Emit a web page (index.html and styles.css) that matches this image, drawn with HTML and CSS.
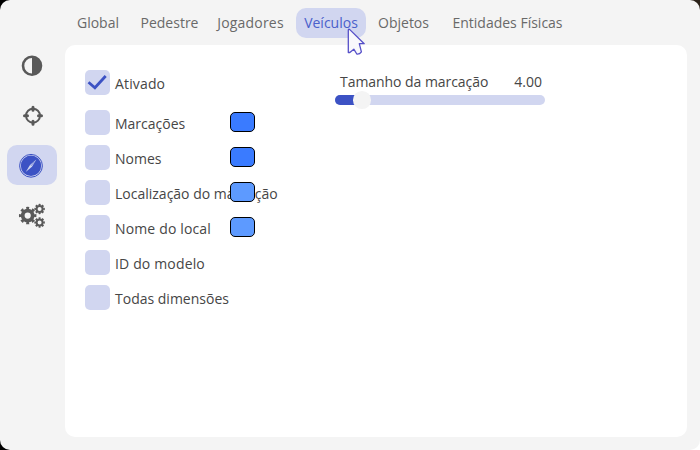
FILE: index.html
```html
<!DOCTYPE html>
<html lang="pt-BR">
<head>
<meta charset="utf-8">
<title>Veículos</title>
<link rel="stylesheet" href="styles.css">
</head>
<body>
<div class="window">
  <nav class="sidebar">
    <a class="side-item"><svg width="50" height="40" viewBox="7 45 50 40"><circle cx="32" cy="65.7" r="9" fill="none" stroke="#595959" stroke-width="2.6"/><path d="M32 56.5a9.2 9.2 0 0 1 0 18.4z" fill="#595959"/></svg></a>
    <a class="side-item"><svg width="50" height="40" viewBox="7 95 50 40"><g fill="none" stroke="#595959"><circle cx="33" cy="115.700" r="7" stroke-width="1.900"/><path stroke-width="3" stroke-linecap="round" d="M33 107.200v3M33 121.200v3M24.500 115.700h3M38.500 115.700h3"/></g></svg></a>
    <a class="side-item active"><svg width="50" height="40" viewBox="7 145 50 40"><circle cx="31" cy="165.800" r="11.400" fill="none" stroke="#3c52c4" stroke-width="1"/><circle cx="31" cy="165.800" r="10.200" fill="#3c52c4"/><path d="M36.300 159.600 32 166.700 25.700 172 30 164.900z" fill="#d1d6f0"/><path d="M34.600 161.600 31 165.800" stroke="#3c52c4" stroke-width=".6"/></svg></a>
    <a class="side-item"><svg width="50" height="40" viewBox="7 195 50 40"><g fill="none" stroke="#595959"><circle cx="27.700" cy="215.600" r="5" stroke-width="3.800"/><circle cx="27.700" cy="215.600" r="7.500" stroke-width="2.500" pathLength="16" stroke-dasharray="1" stroke-dashoffset=".5"/><circle cx="39.600" cy="209" r="3" stroke-width="2"/><circle cx="39.600" cy="209" r="4.400" stroke-width="1.700" pathLength="16" stroke-dasharray="1.200 .8" stroke-dashoffset=".6"/><circle cx="39.600" cy="222.500" r="3" stroke-width="2"/><circle cx="39.600" cy="222.500" r="4.400" stroke-width="1.700" pathLength="16" stroke-dasharray="1.200 .8" stroke-dashoffset=".6"/></g></svg></a>
  </nav>
  <div class="main">
    <nav class="tabs">
      <a class="tab global">Global</a>
      <a class="tab pedestre">Pedestre</a>
      <a class="tab jogadores">Jogadores</a>
      <a class="tab veiculos active">Veículos</a>
      <a class="tab objetos">Objetos</a>
      <a class="tab entidades">Entidades Físicas</a>
    </nav>
    <section class="panel">
      <div class="options">
        <div class="row first"><span class="box"><svg width="25" height="25" viewBox="0 0 25 25"><path d="M3.500 12.300 9.900 17.800 20.700 6" fill="none" stroke="#3c52c4" stroke-width="2.800"/></svg></span><span class="label ativado">Ativado</span></div>
        <div class="row"><span class="box"></span><span class="label marcacoes">Marcações</span><span class="swatch"></span></div>
        <div class="row"><span class="box"></span><span class="label nomes">Nomes</span><span class="swatch"></span></div>
        <div class="row"><span class="box"></span><span class="label local">Localização do marcação</span><span class="swatch light"></span></div>
        <div class="row"><span class="box"></span><span class="label nome-local">Nome do local</span><span class="swatch light"></span></div>
        <div class="row"><span class="box"></span><span class="label modelo">ID do modelo</span></div>
        <div class="row"><span class="box"></span><span class="label dimensoes">Todas dimensões</span></div>
      </div>
      <div class="slider">
        <div class="slider-head"><span class="slider-label">Tamanho da marcação</span><span class="slider-value">4.00</span></div>
        <div class="track"><div class="fill"></div><div class="knob"></div></div>
      </div>
    </section>
  </div>
  <svg class="cursor" width="20" height="28" viewBox="346 28 20 28"><path d="M348.300 30.300Q348.300 28.600 349.800 29.600L364.200 43.700H359.300L361.400 51.800Q359.700 54.300 356.800 54L353.800 49.200 349.800 52.500H348.300z" fill="#f8f8fc" stroke="#554fc8" stroke-width="1.300" stroke-linejoin="round"/></svg>
</div>
</body>
</html>
```
FILE: styles.css
```css
* { box-sizing: border-box; }
body {
  margin: 0;
  width: 700px;
  height: 450px;
  overflow: hidden;
  background: linear-gradient(90deg, #000 50%, #2b2119 50%) top / 100% 50% no-repeat,
    linear-gradient(90deg, #000 50%, #fff 50%) bottom / 100% 50% no-repeat;
  font: 14px/20px "Open Sans", "Noto Sans", sans-serif;
  color: #464646;
}
.window {
  position: relative;
  display: flex;
  width: 700px;
  height: 450px;
  background: #f4f4f4;
  border-radius: 10px;
}
.sidebar {
  display: flex;
  flex-direction: column;
  gap: 10px;
  width: 65px;
  padding: 45px 0 0 7px;
}
.side-item { width: 50px; height: 40px; border-radius: 10px; }
.side-item svg { display: block; }
.side-item.active { background: #d1d6f0; }
.main { width: 622px; }
.tabs { display: flex; height: 45px; padding: 8px 0 0 4px; }
.tab {
  height: 30px;
  line-height: 30px;
  border-radius: 10px;
  text-align: center;
  white-space: nowrap;
  color: #696969;
}
.tab.active { background: #d1d6f0; color: #4a60cb; }
.global { width: 58px; }
.pedestre { width: 73px; margin-left: 6px; }
.jogadores { width: 83px; margin-left: 3px; letter-spacing: 0.2px; }
.veiculos { width: 70px; margin-left: 4px; }
.objetos { width: 67px; margin-left: 4px; }
.entidades { width: 125px; margin-left: 8px; }
.panel {
  display: flex;
  gap: 35px;
  height: 392px;
  padding: 25px 20px;
  background: #fff;
  border-radius: 10px;
}
.options { display: flex; flex-direction: column; gap: 10px; width: 215px; }
.row { display: flex; align-items: flex-start; height: 25px; }
.row.first { margin-bottom: 5px; }
.box {
  flex: none;
  width: 25px;
  height: 25px;
  margin-right: 5px;
  background: #d1d6f0;
  border-radius: 5px;
}
.box svg { display: block; }
.label { flex: none; width: 115px; padding-top: 4px; white-space: nowrap; }
.ativado, .nome-local, .modelo { letter-spacing: 0.15px; }
.swatch {
  position: relative;
  flex: none;
  width: 25px;
  height: 20px;
  margin-top: 2px;
  background: #3a7bff;
  border: 1px solid #000;
  border-radius: 5px;
}
.swatch.light { background: #5d9aff; }
.slider { width: 210px; }
.slider-head {
  display: flex;
  justify-content: space-between;
  height: 25px;
  padding: 2px 3px 0 5px;
  white-space: nowrap;
}
.slider-label { letter-spacing: -0.05px; }
.track {
  position: relative;
  height: 10px;
  background: #d1d6f0;
  border-radius: 5px;
}
.fill { width: 27px; height: 10px; background: #3c52c4; border-radius: 5px 0 0 5px; }
.knob {
  position: absolute;
  left: 18px;
  top: -4px;
  width: 17.5px;
  height: 17.5px;
  border-radius: 50%;
  background: #f4f4f4;
}
.cursor { position: absolute; left: 346px; top: 28px; }
```
